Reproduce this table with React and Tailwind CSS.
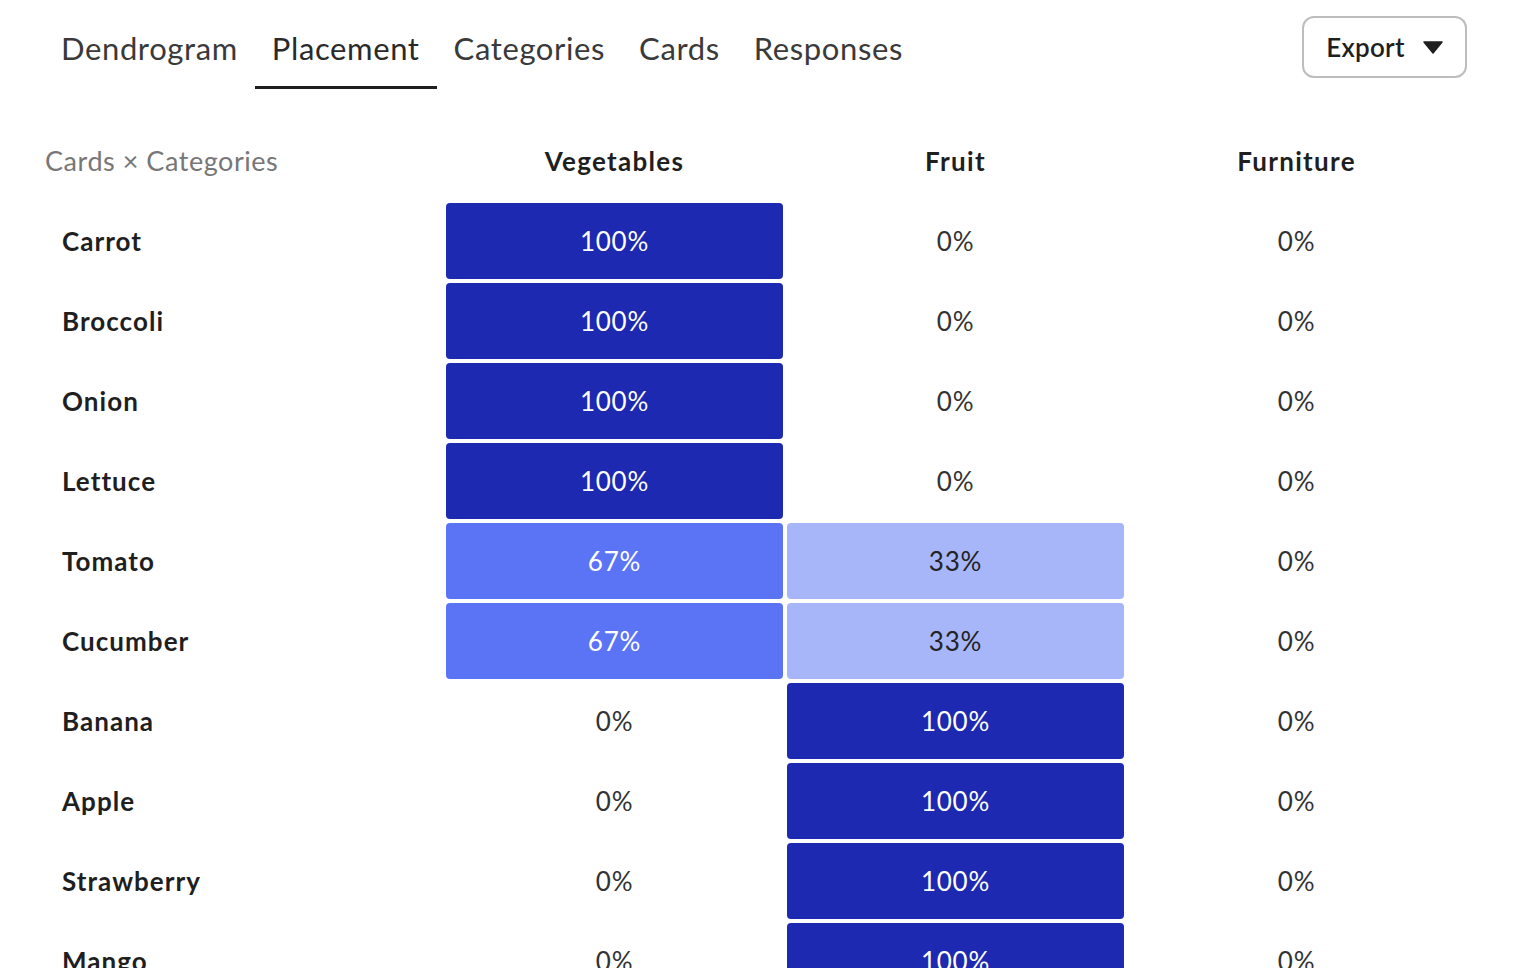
import React from 'react';

const tabs = ['Dendrogram', 'Placement', 'Categories', 'Cards', 'Responses'];
const columns = ['Vegetables', 'Fruit', 'Furniture'];

const rows = [
  { card: 'Carrot', values: [100, 0, 0] },
  { card: 'Broccoli', values: [100, 0, 0] },
  { card: 'Onion', values: [100, 0, 0] },
  { card: 'Lettuce', values: [100, 0, 0] },
  { card: 'Tomato', values: [67, 33, 0] },
  { card: 'Cucumber', values: [67, 33, 0] },
  { card: 'Banana', values: [0, 100, 0] },
  { card: 'Apple', values: [0, 100, 0] },
  { card: 'Strawberry', values: [0, 100, 0] },
  { card: 'Mango', values: [0, 100, 0] },
];

const cellClass = (value) => {
  if (value >= 90) return 'bg-[#1c29b0] text-white';
  if (value >= 50) return 'bg-[#5b74f6] text-white';
  if (value > 0) return 'bg-[#a7b5f9] text-[#222222]';
  return 'text-[#333333]';
};

const App = () => {
  return (
    <div className="min-h-screen bg-white font-['Lato',sans-serif] text-[#222222]">
      <div className="flex items-start justify-between pl-[44px] pr-[59px]">
        <nav className="flex">
          {tabs.map((tab) => (
            <div
              key={tab}
              className={`px-[17px] pt-[31px] pb-[21px] text-[31px] leading-[34px] tracking-[0.02em] border-b-[3px] ${
                tab === 'Placement' ? 'border-[#1f1f1f] text-[#2a2a2a]' : 'border-transparent text-[#3a3a3a]'
              }`}
            >
              {tab}
            </div>
          ))}
        </nav>
        <button className="mt-[16px] flex h-[62px] w-[165px] items-center justify-center gap-[18px] rounded-[12px] border-2 border-[#bdbdbd] text-[26px] font-semibold tracking-[0.01em] text-[#1f1f1f]">
          Export
          <svg width="20" height="13" viewBox="0 0 20 13">
            <path d="M1 1 H19 L10 12 Z" fill="#1f1f1f" stroke="#1f1f1f" strokeWidth="1.5" strokeLinejoin="round" />
          </svg>
        </button>
      </div>

      <div className="mt-[33px] pl-[45px] pr-[59px]">
        <div className="grid grid-cols-[399px_1fr_1fr_1fr]">
          <div className="flex h-[79px] items-center text-[27px] tracking-[0.02em] text-[#777777]">Cards × Categories</div>
          {columns.map((col) => (
            <div
              key={col}
              className="flex h-[79px] items-center justify-center text-[26px] font-bold tracking-[0.05em] text-[#1f1f1f]"
            >
              {col}
            </div>
          ))}

          {rows.map((row) => (
            <React.Fragment key={row.card}>
              <div className="flex h-[80px] items-center pl-[17px] text-[26px] font-bold tracking-[0.04em] text-[#1f1f1f]">
                {row.card}
              </div>
              {row.values.map((v, i) => (
                <div key={i} className="h-[80px] p-[2px]">
                  <div
                    className={`flex h-full items-center justify-center rounded-[4px] text-[26px] tracking-[0.03em] ${cellClass(v)}`}
                  >
                    {v}%
                  </div>
                </div>
              ))}
            </React.Fragment>
          ))}
        </div>
      </div>
    </div>
  );
};

export default App;
